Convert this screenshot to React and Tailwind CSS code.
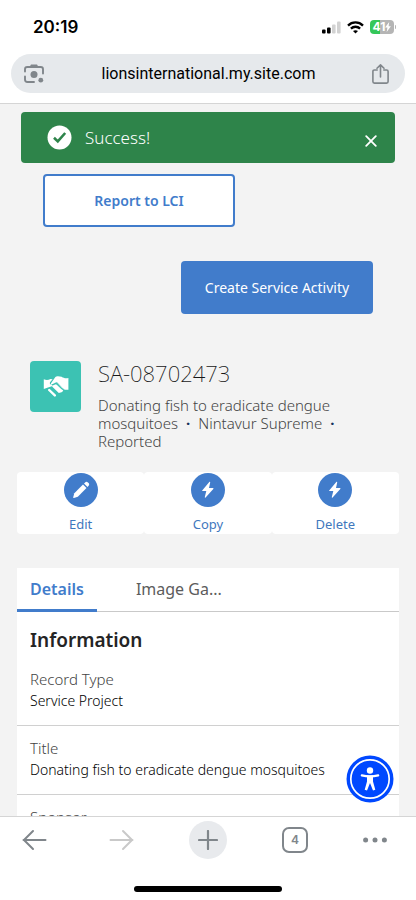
const actions = [
  { label: "Edit", icon: "pencil" },
  { label: "Copy", icon: "bolt" },
  { label: "Delete", icon: "bolt" },
];

const fields = [
  { label: "Record Type", value: "Service Project" },
  { label: "Title", value: "Donating fish to eradicate dengue mosquitoes" },
  { label: "Sponsor", value: "" },
];

function StatusBar() {
  return (
    <div className="flex h-[54px] items-center justify-between pl-[33px] pr-5">
      <span className="text-[17px] leading-5 font-semibold">20:19</span>

      <div className="flex items-center gap-[6px]">
        <svg width="19" height="13" viewBox="0 0 19 13">
          <rect x="0" y="8.5" width="3.6" height="4" rx="1" fill="#000" />
          <rect x="5" y="6.5" width="3.6" height="6" rx="1" fill="#000" />
          <rect x="10" y="3.5" width="3.6" height="9" rx="1" fill="#d2d2d2" />
          <rect x="15" y="0.5" width="3.6" height="12" rx="1" fill="#d2d2d2" />
        </svg>

        <svg width="17" height="13" viewBox="0 0 17 13" fill="none" stroke="#000" strokeWidth="2.3">
          <path d="M1 4.6C5.2.4 11.8.4 16 4.6" />
          <path d="M3.9 7.6c2.6-2.5 6.6-2.5 9.2 0" />
          <path d="M8.5 12.6 6 10.1c1.4-1.3 3.6-1.3 5 0z" fill="#000" stroke="none" />
        </svg>

        <div className="flex items-center gap-px">
          <div className="flex h-[14px] w-6 items-center justify-center rounded-[4px] bg-linear-to-r from-[#34c759] from-41% to-[#b5b5b5] to-41% text-xs leading-none font-bold text-white">
            41
            <svg width="6" height="10" viewBox="0 0 6 10" fill="#fff">
              <path d="M4.2 0 .1 5.6h2.3L1.7 10 5.9 4.2H3.6z" />
            </svg>
          </div>
          <div className="h-1 w-px rounded-r bg-[#b5b5b5]" />
        </div>
      </div>
    </div>
  );
}

function AddressBar() {
  return (
    <div className="mx-[11px] mb-[10px] flex h-[39px] items-center justify-between rounded-full bg-[#e6e9ec] pr-4 pl-3">
      <button aria-label="Search with camera">
        <svg width="22" height="22" viewBox="0 0 22 22" fill="none" stroke="#80868b" strokeWidth="1.9">
          <path d="M2 8.5V6.3C2 4.8 3 4 4.3 4h13.4C19 4 20 4.8 20 6.3v4.2" strokeLinecap="round" />
          <path d="M2 13.5v3c0 1.6 1 2.5 2.5 2.5H11" strokeLinecap="round" />
          <path d="M6.5 4 8 1.5h6L15.5 4z" fill="#80868b" stroke="none" />
          <circle cx="11" cy="11.4" r="3.5" fill="#80868b" stroke="none" />
          <circle cx="17.8" cy="17.2" r="2.4" fill="#80868b" stroke="none" />
        </svg>
      </button>

      <span className="font-['Roboto',sans-serif] text-base leading-5">lionsinternational.my.site.com</span>

      <button aria-label="Share">
        <svg width="17" height="20" viewBox="0 0 17 20" fill="none" stroke="#80868b" strokeWidth="1.6" strokeLinecap="round" strokeLinejoin="round">
          <path d="M5.2 6H2.4C1.4 6 .9 6.5.9 7.5v10c0 1 .5 1.6 1.5 1.6h12.2c1 0 1.5-.6 1.5-1.6v-10c0-1-.5-1.5-1.5-1.5h-2.8" />
          <path d="M8.5 13V1M5 4.3 8.5.9 12 4.3" />
        </svg>
      </button>
    </div>
  );
}

function Toast() {
  return (
    <div role="status" className="mx-[21px] flex h-[51px] items-center rounded-[4px] bg-[#2e844a] pr-[18px] pl-[26px] text-white">
      <svg width="25" height="25" viewBox="0 0 25 25">
        <circle cx="12.5" cy="12.5" r="12" fill="#fff" />
        <path d="m7 12.8 3.8 3.6L18.2 8" fill="none" stroke="#2e844a" strokeWidth="2.6" />
      </svg>
      <span className="ml-[13px] flex-1 text-[17px] leading-6 font-light">Success!</span>
      <button aria-label="Close" className="mt-[6px]">
        <svg width="12" height="12" viewBox="0 0 12 12" stroke="#fff" strokeWidth="1.8" strokeLinecap="round">
          <path d="m1.2 1.2 9.6 9.6M10.8 1.2 1.2 10.8" />
        </svg>
      </button>
    </div>
  );
}

function RecordHeader() {
  return (
    <div className="mt-[47px] flex gap-[17px] px-[30px]">
      <div className="flex size-[51px] shrink-0 items-center justify-center rounded-[4px] bg-[#3cc2b3]">
        <svg width="26" height="21" viewBox="0 0 26 21">
          <path d="M.8 3.3c2.4 1 4.6.8 6.6-.2l2.2.2-2.6 3c-.8 1.4.8 3 2.6 2.4l3.2-1.5 6 6c1 1.2-.3 2.6-1.6 2L10.4 9.8 5 11.6.8 13z" fill="#fff" />
          <path d="M8 7.2 12.4 1C13 .3 14 .1 15 .2l3.6.5c2.1 1.4 4.3 1.9 6.8 1.2v11.8l-3.2.1c-1.4-.2-2-1-2.7-1.8l-5.2-5.4c-.6-.6-1.4-.5-2-.1L9.6 8.4C8.4 8.9 7.6 8 8 7.2z" fill="#fff" />
          <path d="m9 8.2 3.8-2 7 6.4c1.2 1.4-.2 4-2.2 3.8l-1.8.5-6.5-6.2z" fill="#fff" />
          <path d="M9 8.7c1.6.4 2.8-1.6 4.3-1.1 2.2 1.3 4 4.5 7 6" fill="none" stroke="#3cc2b3" strokeWidth="1.4" />
          <path d="m6.2 14 5.6 5.4" stroke="#fff" strokeWidth="2.4" strokeLinecap="round" />
        </svg>
      </div>

      <div>
        <h1 className="text-[22px] leading-6 font-extralight text-[#181818]">SA-08702473</h1>
        <p className="mt-[11px] text-[15px] leading-[18px] font-light text-[#444]">
          Donating fish to eradicate dengue mosquitoes
          <span className="mx-2 font-bold text-[#16325c]">·</span>
          Nintavur Supreme
          <span className="mx-2 font-bold text-[#16325c]">·</span> Reported
        </p>
      </div>
    </div>
  );
}

function ActionIcon({ name }) {
  if (name === "pencil") {
    return (
      <svg width="18" height="18" viewBox="0 0 18 18" fill="#fff">
        <path d="m11 3.5 3.5 3.5-8.7 8.7-3.9 1.2c-.5.1-.8-.2-.7-.7l1.1-4z" />
        <path d="m12 2.5 1.1-1.1c.9-.9 2-.8 2.8 0l.7.7c.8.8.8 1.9 0 2.7L15.5 6z" />
      </svg>
    );
  }

  return (
    <svg width="14" height="18" viewBox="0 0 14 18" fill="#fff">
      <path d="M8.3 1 1.2 9.4c-.2.4-.1.7.4.7h3.7l-1.5 6c-.1.7.4.9.8.4l7.7-8.6c.3-.4.1-.8-.3-.8H8l1.2-5.7c.1-.6-.5-.9-.9-.4z" />
    </svg>
  );
}

function Actions() {
  return (
    <div className="mx-[17px] mt-[22px] grid grid-cols-3">
      {actions.map((action) => (
        <button key={action.label} className="flex h-[62px] flex-col items-center rounded-[4px] bg-white pt-px text-[#3f78bd]">
          <span className="flex size-[34px] items-center justify-center rounded-full bg-[#417ccb]">
            <ActionIcon name={action.icon} />
          </span>
          <span className="mt-2 text-[13px] leading-[18px]">{action.label}</span>
        </button>
      ))}
    </div>
  );
}

function DetailsCard() {
  return (
    <div className="mx-[17px] mt-[34px] bg-white">
      <div role="tablist" className="flex h-11 border-b border-[#c9c9c9] text-base">
        <button role="tab" aria-selected="true" className="-mb-px border-b-[3px] border-[#417ccb] px-[13px] font-semibold text-[#417ccb]">
          Details
        </button>
        <button role="tab" aria-selected="false" className="ml-[26px] px-[13px] pb-[2px] text-[#5c5c5c]">
          Image Ga...
        </button>
      </div>

      <h2 className="px-[13px] pt-3 pb-px text-[19px] leading-8 font-semibold text-[#242424]">Information</h2>

      <dl>
        {fields.map((field) => (
          <div key={field.label} className="border-b border-[#d0d0d0] px-[13px] py-3">
            <dt className="text-[15px] leading-5 font-light text-[#444]">{field.label}</dt>
            <dd className="text-sm leading-6 font-light text-black">{field.value}</dd>
          </div>
        ))}
      </dl>
    </div>
  );
}

function BrowserToolbar() {
  return (
    <footer className="border-t border-[#d5d5d5] bg-white font-['Inter',sans-serif]">
      <div className="flex h-[46px] items-center justify-between px-[15px]">
        <button aria-label="Back" className="flex w-[38px] justify-center">
          <svg width="25" height="22" viewBox="0 0 25 22" fill="none" stroke="#80868b" strokeWidth="2" strokeLinecap="round" strokeLinejoin="round">
            <path d="M23.5 11h-22M11 2l-9 9 9 9" />
          </svg>
        </button>
        <button aria-label="Forward" className="flex w-[38px] justify-center">
          <svg width="25" height="22" viewBox="0 0 25 22" fill="none" stroke="#c9c9c9" strokeWidth="2" strokeLinecap="round" strokeLinejoin="round">
            <path d="M1.5 11h22M14 2l9 9-9 9" />
          </svg>
        </button>
        <button aria-label="New tab" className="flex size-[38px] items-center justify-center rounded-full bg-[#e8eaed]">
          <svg width="20" height="20" viewBox="0 0 20 20" stroke="#80868b" strokeWidth="2.2" strokeLinecap="round">
            <path d="M10 1v18M1 10h18" />
          </svg>
        </button>
        <button aria-label="Open tabs" className="flex w-[38px] justify-center">
          <span className="flex size-[26px] items-center justify-center rounded-[7px] border-2 border-[#80868b] text-xs font-semibold text-[#80868b]">
            4
          </span>
        </button>
        <button aria-label="More" className="flex w-[38px] justify-start">
          <svg width="25" height="6" viewBox="0 0 25 6" fill="#80868b">
            <circle cx="2.6" cy="3" r="2.5" />
            <circle cx="12" cy="3" r="2.5" />
            <circle cx="21.4" cy="3" r="2.5" />
          </svg>
        </button>
      </div>
      <div className="flex h-[37px] items-end justify-center pb-2">
        <div className="h-[6px] w-[148px] rounded-full bg-black" />
      </div>
    </footer>
  );
}

export default function App() {
  return (
    <div className="flex h-screen flex-col bg-white font-['Noto_Sans',sans-serif]">
      <header className="border-b border-[#d5d5d5] bg-white font-['Inter',sans-serif] text-black">
        <StatusBar />
        <AddressBar />
      </header>

      <div className="relative min-h-0 flex-1">
        <main className="h-full overflow-hidden bg-[#f3f3f3] pt-2">
          <Toast />

          <div className="flex flex-col gap-[34px] px-[43px] pt-[11px]">
            <button className="h-[53px] w-48 self-start rounded-[4px] border-2 border-[#417ccb] bg-white text-sm font-semibold text-[#417ccb]">
              Report to LCI
            </button>
            <button className="h-[53px] w-48 self-end rounded-[4px] bg-[#417ccb] text-sm text-white">
              Create Service Activity
            </button>
          </div>

          <RecordHeader />
          <Actions />
          <DetailsCard />
        </main>

        <button aria-label="Accessibility options" className="absolute right-[22px] bottom-[13px]">
          <svg width="48" height="48" viewBox="0 0 48 48">
            <circle cx="24" cy="24" r="23.5" fill="#0048ff" />
            <circle cx="24" cy="24" r="19.2" fill="none" stroke="#fff" strokeWidth="1.7" />
            <circle cx="24" cy="15.5" r="3.2" fill="#fff" />
            <path d="M15.8 20.4c5.4 1.3 11 1.3 16.4 0" fill="none" stroke="#fff" strokeWidth="2.2" strokeLinecap="round" />
            <path d="M21 20.5h6v6l2.3 8.2-2.3.8-3-7.5-3 7.5-2.3-.8L21 26.5z" fill="#fff" />
          </svg>
        </button>
      </div>

      <BrowserToolbar />
    </div>
  );
}
